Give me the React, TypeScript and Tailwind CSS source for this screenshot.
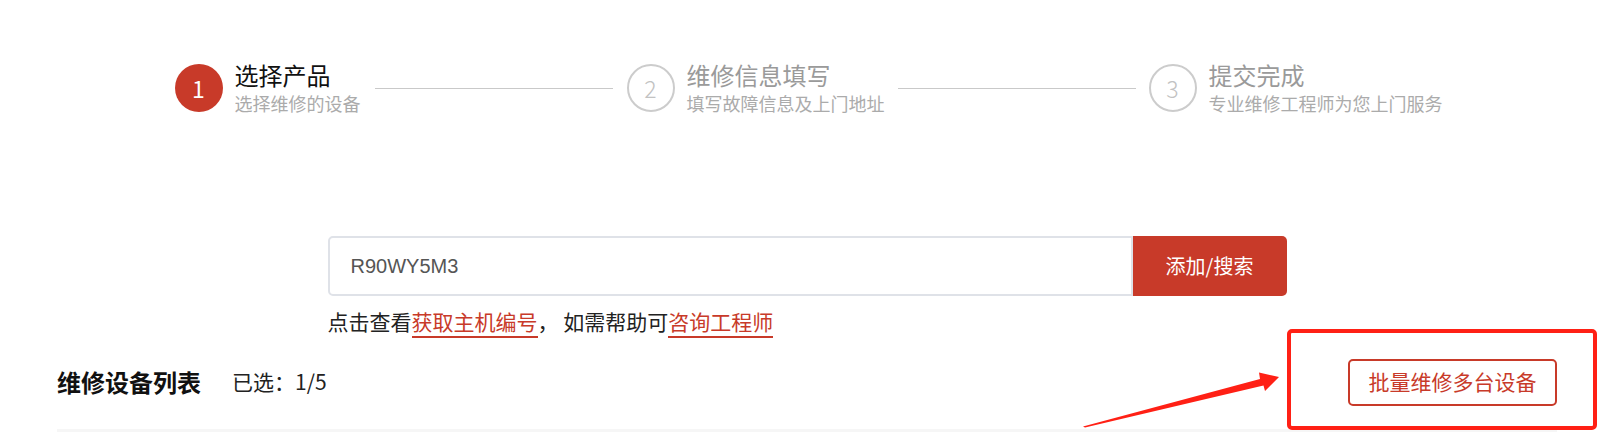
import React from "react";

type StepProps = {
  n: string;
  active?: boolean;
  title: string;
  sub: string;
};

function Step({ n, active, title, sub }: StepProps) {
  return (
    <div className="flex items-center">
      {active ? (
        <div className="flex h-12 w-12 items-center justify-center rounded-full bg-[#c83a29] text-[23px] text-white">
          {n}
        </div>
      ) : (
        <div className="flex h-12 w-12 items-center justify-center rounded-full border-2 border-[#cccccc] text-[23px] font-light text-[#c2c2c2]">
          {n}
        </div>
      )}
      <div className="ml-3 flex flex-col">
        <div
          className={
            active
              ? "text-[24px] leading-[30px] text-[#111]"
              : "text-[24px] leading-[30px] text-[#9a9a9a]"
          }
        >
          {title}
        </div>
        <div className="text-[18px] leading-[26px] text-[#ababab]">{sub}</div>
      </div>
    </div>
  );
}

export default function App() {
  return (
    <div className="relative min-h-[432px] overflow-hidden bg-white font-['Noto_Sans_CJK_SC',sans-serif]">
      <div className="ml-[57px] w-[1500px]">
        {/* progress steps */}
        <div className="flex items-center justify-center pt-[60px] pl-[3px]">
          <Step n="1" active title="选择产品" sub="选择维修的设备" />
          <div className="mx-[14px] h-px w-[238px] bg-[#c9c9c9]" />
          <Step n="2" title="维修信息填写" sub="填写故障信息及上门地址" />
          <div className="mx-[13px] h-px w-[238px] bg-[#c9c9c9]" />
          <Step n="3" title="提交完成" sub="专业维修工程师为您上门服务" />
        </div>

        {/* search */}
        <div className="mx-auto mt-[120px] w-[959px]">
          <div className="flex h-[60px]">
            <div className="flex flex-1 items-center rounded-l-[5px] border-2 border-[#dfe2e8] pl-[21px] font-['Liberation_Sans',sans-serif] text-[20px] text-[#555]">
              R90WY5M3
            </div>
            <button className="w-[154px] rounded-r-[5px] bg-[#c83a29] text-[20px] text-white">
              添加/搜索
            </button>
          </div>
          <p className="mt-[10px] text-[21px] text-[#222]">
            点击查看
            <a className="border-b-2 border-[#c83a29] text-[#c83a29]">获取主机编号</a>
            ， 如需帮助可
            <a className="border-b-2 border-[#c83a29] text-[#c83a29]">咨询工程师</a>
          </p>
        </div>

        {/* list header */}
        <div className="mt-[21px] flex items-center justify-between">
          <div className="flex items-center">
            <h2 className="text-[24px] font-bold text-[#111]">维修设备列表</h2>
            <span className="ml-[31px] text-[21px] text-[#222]">已选：1/5</span>
          </div>
          <button className="h-[47px] w-[209px] rounded-[5px] border-2 border-[#c83a29] text-[21px] text-[#c83a29]">
            批量维修多台设备
          </button>
        </div>
        <div className="mt-[23px] h-[40px] bg-[#f6f6f6]" />
      </div>

      {/* annotation overlays */}
      <div className="pointer-events-none absolute left-[1287px] top-[329px] h-[101px] w-[310px] rounded-[5px] border-[4px] border-[#ff2015]" />
      <svg
        className="pointer-events-none absolute left-0 top-0"
        width="1609"
        height="432"
        viewBox="0 0 1609 432"
      >
        <polygon
          points="1083,426.5 1260,379 1259,372.5 1279,377 1265,391 1263.5,385.5 1085,427.5"
          fill="#ff2015"
        />
      </svg>
    </div>
  );
}
